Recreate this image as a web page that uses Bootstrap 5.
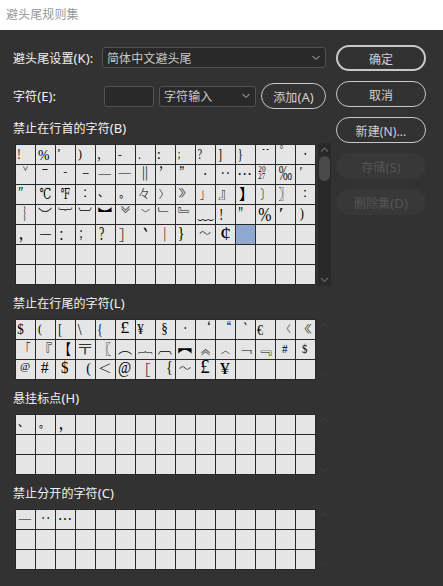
<!DOCTYPE html>
<html lang="zh-CN">
<head>
<meta charset="utf-8">
<meta name="viewport" content="width=device-width, initial-scale=1">
<title>避头尾规则集</title>
<link href="https://cdn.jsdelivr.net/npm/bootstrap@5.3.0/dist/css/bootstrap.min.css" rel="stylesheet">
<style>
body{background:#323232;color:#f2f2f2;font:12px/18px "Noto Sans","Noto Sans CJK SC",sans-serif;letter-spacing:.1px;height:586px}
.titlebar{height:30px;padding-left:6px;color:#999}
.left-pane{width:318px;padding:17px 0 0 13px}
.right-pane{width:90px;margin-left:18px;padding-top:15px;gap:10px}
.set-row,.char-row{width:313px}
.set-row{height:21px}
.char-row{height:26px;margin-top:15px}
.key{font-size:13px;line-height:1}
.lbl-set,.lbl-char,.field span{padding-top:2px}
.lbl-set{width:89px}.lbl-char{width:91px}
.field{height:21px;border:1px solid #535353;border-radius:3px;background:#292929;color:#c8c8c8;padding:0 4px 0 4px}
.f-input{width:50px}.f-kind{width:97px;margin-left:5px}
.pill{height:26px;border:1px solid #c8c8c8;border-radius:13px;color:#d0d0d0;font-size:12px;line-height:18px;padding:3px 0 0;letter-spacing:inherit}
.pill:hover{color:#fff;border-color:#fff}
.pill-main{border-width:2px}
.pill-off,.pill-off:disabled{background:#383838;border-color:#383838;color:#555;opacity:1}
.pill-add{width:65px;margin-left:5px}
.sect{height:18px;line-height:21px;margin:8px 0}
.sect-first{margin-top:9px}
.gridline{margin-left:2px;width:316px}
.glyphs{display:grid;grid-template-columns:repeat(15,19px);grid-auto-rows:19px;gap:1px;padding:1px;background:#282828;width:301px}
.cell{background:#e5e5e5;display:grid}
.cell.sel{background:#8fa8cf}
.gl{grid-area:1/1;justify-self:start;letter-spacing:0;color:#000;white-space:pre;transform-origin:0 0;height:19px}
.gl-soft{color:#333}
.scroller{width:13px;margin:-1px 0 -1px 2px;padding:4px 0 3px}
.scroller.live{background:#292929}
.scroller svg{display:block;flex:none}
.thumb{width:11px;height:25px;border-radius:5.5px;background:#4a4a4a;margin-top:3px}
</style>
</head>
<body class="d-flex flex-column overflow-hidden">
<header class="titlebar bg-white d-flex align-items-center flex-shrink-0">避头尾规则集</header>
<main class="d-flex align-items-start">
  <section class="left-pane flex-shrink-0">
    <div class="set-row d-flex align-items-center">
      <label class="lbl-set flex-shrink-0">避头尾设置<span class="key">(K):</span></label>
      <div class="field d-flex align-items-center justify-content-between flex-grow-1"><span>简体中文避头尾</span>
        <svg width="10" height="6" viewBox="0 0 10 6" fill="none" stroke="#bdbdbd"><path d="M1.5 1 5 4.5 8.5 1"/></svg></div>
    </div>
    <div class="char-row d-flex align-items-center">
      <label class="lbl-char flex-shrink-0">字符<span class="key">(E):</span></label>
      <div class="field f-input flex-shrink-0"></div>
      <div class="field f-kind d-flex align-items-center justify-content-between flex-shrink-0"><span>字符输入</span>
        <svg width="10" height="6" viewBox="0 0 10 6" fill="none" stroke="#bdbdbd"><path d="M1.5 1 5 4.5 8.5 1"/></svg></div>
      <button class="btn pill pill-add flex-shrink-0">添加<span class="key">(A)</span></button>
    </div>
    <div class="sect sect-first">禁止在行首的字符<span class="key">(B)</span></div>
    <div class="gridline d-flex" data-grid="head"></div>
    <div class="sect">禁止在行尾的字符<span class="key">(L)</span></div>
    <div class="gridline d-flex" data-grid="tail"></div>
    <div class="sect">悬挂标点<span class="key">(H)</span></div>
    <div class="gridline d-flex" data-grid="hang"></div>
    <div class="sect">禁止分开的字符<span class="key">(C)</span></div>
    <div class="gridline d-flex" data-grid="keep"></div>
  </section>
  <aside class="right-pane d-flex flex-column flex-shrink-0">
    <button class="btn pill pill-main">确定</button>
    <button class="btn pill">取消</button>
    <button class="btn pill">新建(N)...</button>
    <button class="btn pill pill-off" disabled>存储<span class="key">(S)</span></button>
    <button class="btn pill pill-off" disabled>删除集<span class="key">(D)</span></button>
  </aside>
</main>
<script src="https://cdn.jsdelivr.net/npm/bootstrap@5.3.0/dist/js/bootstrap.bundle.min.js"></script>
<script>
// Each entry: column, row, character, then the ink box inside the cell: x, y, width, height.
const grids = {
head:{rows:7,sel:[11,4],g:[
[0,0,"!",2,5,2,9.5],[1,0,"%",2,5,11,10],[2,0,"’",1.7,4,2.5,3.5],[3,0,")",2,4.5,4,12.5],[4,0,",",1.5,12,2.5,4.5],[5,0,"-",1.7,10.8,4.2,1.4],[6,0,".",2.2,12.9,2,2],[7,0,":",1.7,8,2,6.8],[8,0,";",1.7,8,2.5,8.2],[9,0,"?",1.7,5.3,4.5,9.2],[10,0,"]",2.3,4.5,3,12.5],[11,0,"}",2.5,4.5,3.5,12.7],[12,0,"¨",5.5,3.9,8,2.2],[13,0,"°",3.7,2,3.5,3.2],[14,0,"·",8,8,2.4,2.4],
[0,1,"ˇ",6.2,1.5,5.6,5],[1,1,"ˉ",6,4,6,1],[2,1,"‐",7.3,7.8,4,1.4],[3,1,"–",6,8,7,1],[4,1,"—",1.7,9,14,1],[5,1,"―",1.7,8,14,1],[6,1,"‖",7,1.5,4,14.5],[7,1,"’",3.7,2,2.7,5],[8,1,"”",3.3,1.7,4.5,4.2],[9,1,"•",8,8,2.3,2.3],[10,1,"‥",5.5,8,7.5,2.2],[11,1,"…",2.2,8,12.8,2.2],[12,1,"20",2.3,2.2,7,4.8],[12,1,"27",2.3,9.4,7,4.8],[13,1,"‰",2.7,1.7,13.3,14],[14,1,"′",3.7,2,2.3,4],
[0,2,"″",2.3,2.3,5,4.3],[1,2,"℃",3.5,2.5,11.2,12.2],[2,2,"℉",4.7,2.7,9.3,12],[3,2,"：",7.9,5,2.3,8],[4,2,"、",2,10,4.3,4],[5,2,"。",3.2,10.9,4,4],[6,2,"々",2.7,3,10,11],[7,2,"〉",2.7,3.7,4.3,10],[8,2,"》",2.3,4,7.3,9.5],[9,2,"」",3.7,5.3,4,10],[10,2,"』",2.3,5.3,6.5,10],[11,2,"】",3,2,5,14],[12,2,"〕",4.3,2.7,3.7,13],[13,2,"〗",2.5,2,5,14],[14,2,"∶",7.9,4.7,2.3,8.2],
[0,3,"︴",7.5,1.7,2.5,15],[1,3,"︶",2,3,14,4.5],[2,3,"︸",2,2.7,14.3,4],[3,3,"︺",2,2.7,14,4.3],[4,3,"︼",1.7,2.7,14.3,5.3],[5,3,"︾",5,.8,9,8],[6,3,"﹀",5,4,9,3.8],[7,3,"﹂",2,2.7,11,4.3],[8,3,"﹄",1.7,2,11.7,6],[9,3,"﹏",1.5,14,16,2],[10,3,"！",4,4,2.4,11.2],[11,3,"＂",2.3,3.5,4.7,5],[12,3,"％",2.3,3.2,12.7,13],[13,3,"＇",3,3.2,4,4.5],[14,3,"）",3.7,3.3,4.2,13.7],
[0,4,"，",3,11.7,3.3,5.8],[1,4,"－",4,9.8,11,1.3],[2,4,"：",4,6,2.3,9.3],[3,4,"；",3.5,6,3,11],[4,4,"？",3,4,5.5,12],[5,4,"］",2.7,3,5,14],[6,4,"｀",7.3,2.7,4.5,5.7],[7,4,"｜",8.3,3,1,14.5],[8,4,"｝",2.7,3,4.7,14.5],[9,4,"～",3,7.3,12,3.3],[10,4,"￠",4,3,10.5,12.3]]},
tail:{rows:3,g:[
[0,0,"$",1.3,4,7,11.5],[1,0,"(",2,4.3,4,13],[2,0,"[",3,4.3,3,13],[3,0,"\\",1.7,4.7,4.7,11],[4,0,"{",2,4.3,3.7,13.5],[5,0,"£",4.3,2.7,9.7,11],[6,0,"¥",1.3,4.7,7,10],[7,0,"§",6,3,5.2,12],[8,0,"·",8,8,2.3,2.3],[9,0,"‘",11.7,2,2.7,4.3],[10,0,"“",10.7,2,4.7,4.2],[11,0,"‵",8,2,2.7,4.5],[12,0,"€",1,5.3,6.5,9.7],[13,0,"〈",10.7,4.3,4,9],[14,0,"《",8.7,4.7,7.3,9.5],
[0,1,"「",10.3,2.7,4.3,10],[1,1,"『",9.7,2.7,6.7,10.5],[2,1,"【",10,2.5,5,13.8],[3,1,"〒",2.5,3.3,13.2,11.3],[4,1,"〖",10,2.3,5,13.8],[5,1,"︵",1.7,11,14.5,4.2],[6,1,"︷",2,11.3,14.5,3.3],[7,1,"︹",1.7,11,14.3,4.2],[8,1,"︻",1.7,9.7,14.3,5.5],[9,1,"︽",5,9,9,7],[10,1,"︿",5,11,9,3.8],[11,1,"﹁",4.7,11,11,4],[12,1,"﹃",4.3,10,11.7,6],[13,1,"﹟",6,5,6,8.5],[14,1,"﹩",6,4.3,5.7,10],
[0,2,"﹫",4,3.7,10.3,9.3],[1,2,"＃",4.7,3,8.5,10.5],[2,2,"＄",5,1.5,8,13.5],[3,2,"（",10.3,3,4.5,14],[4,2,"＜",3,4.3,12,10],[5,2,"＠",2,2.5,13.3,14.5],[6,2,"［",9.7,3,5,14],[7,2,"｛",11,3,4.3,14.3],[8,2,"～",3,7,12,3.5],[9,2,"￡",4.3,2,10,12],[10,2,"￥",4,3.3,10.5,11.3]]},
hang:{rows:3,g:[[0,0,"、",2,10,4.3,4],[1,0,"。",2.9,10.9,4.1,4.1],[2,0,"，",3,12.3,3.3,5.4]]},
keep:{rows:3,g:[[0,0,"—",2,9,14,1],[1,0,"‥",5.8,8,7.5,2.2],[2,0,"…",2.8,8,12.5,2.2]]}
};
// Full-width signs share the serif design of their half-width partners.
const serifForm = {"！":"!","％":"%","）":")","（":"(","？":"?","；":";","，":",","＄":"$","＠":"@","＃":"#","｛":"{","｝":"}","￡":"£","￥":"¥","￠":"¢","﹩":"$","﹫":"@","﹟":"#","＂":"\"","＇":"′"};
const faceFor = ch => /[ˇ‖〒]/.test(ch) ? '"Noto Sans CJK SC",sans-serif' : /[℃℉]/.test(ch) ? '"DejaVu Serif",serif' : '"Liberation Serif","Noto Sans CJK SC",serif';
const isThin = ch => /[〒ˇ‖々〉》」』〕〗︴︶︸︺︾﹀﹂﹄﹏「『〖〈《︵︷︹︽︿﹁﹃＜［］｜～]/.test(ch);
const pen = document.createElement("canvas").getContext("2d");
const arrow = (d, c) => `<svg width="9" height="6" viewBox="0 0 9 6" fill="none" stroke="${c}" stroke-width="1.1"><path d="${d}"/></svg>`;
for (const box of document.querySelectorAll("[data-grid]")) {
  const name = box.dataset.grid, def = grids[name];
  const grid = document.createElement("div");
  grid.className = "glyphs flex-shrink-0";
  for (let i = 0; i < def.rows * 15; i++) {
    const c = document.createElement("div");
    c.className = "cell";
    grid.append(c);
  }
  if (def.sel) grid.children[def.sel[1] * 15 + def.sel[0]].classList.add("sel");
  for (const [col, row, ch, x, y, w, h] of def.g) {
    const s = document.createElement("span"), face = faceFor(ch), weight = isThin(ch) ? "300 " : "400 ";
    s.className = "gl" + (/[〒‰]/.test(ch) ? " gl-soft" : "");
    s.textContent = serifForm[ch] || ch;
    s.style.font = weight + "15px/19px " + face;
    pen.font = weight + "15px " + face;
    const m = pen.measureText(s.textContent);
    const base = (19 - m.fontBoundingBoxAscent - m.fontBoundingBoxDescent) / 2 + m.fontBoundingBoxAscent;
    const sx = w / (m.actualBoundingBoxLeft + m.actualBoundingBoxRight);
    const sy = h / (m.actualBoundingBoxAscent + m.actualBoundingBoxDescent);
    s.style.transform = `matrix(${sx},0,0,${sy},${x + sx * m.actualBoundingBoxLeft},${y - sy * (base - m.actualBoundingBoxAscent)})`;
    grid.children[row * 15 + col].append(s);
  }
  const live = name === "head", tone = live ? "#666" : "#3b3b3b";
  const bar = document.createElement("div");
  bar.className = "scroller d-flex flex-column align-items-center flex-shrink-0" + (live ? " live" : "");
  bar.innerHTML = arrow("M1 4.5 4.5 1 8 4.5", tone) + (live ? '<div class="thumb"></div>' : "") + '<div class="flex-grow-1"></div>' + arrow("M1 1 4.5 4.5 8 1", tone);
  box.append(grid, bar);
}
</script>
</body>
</html>
